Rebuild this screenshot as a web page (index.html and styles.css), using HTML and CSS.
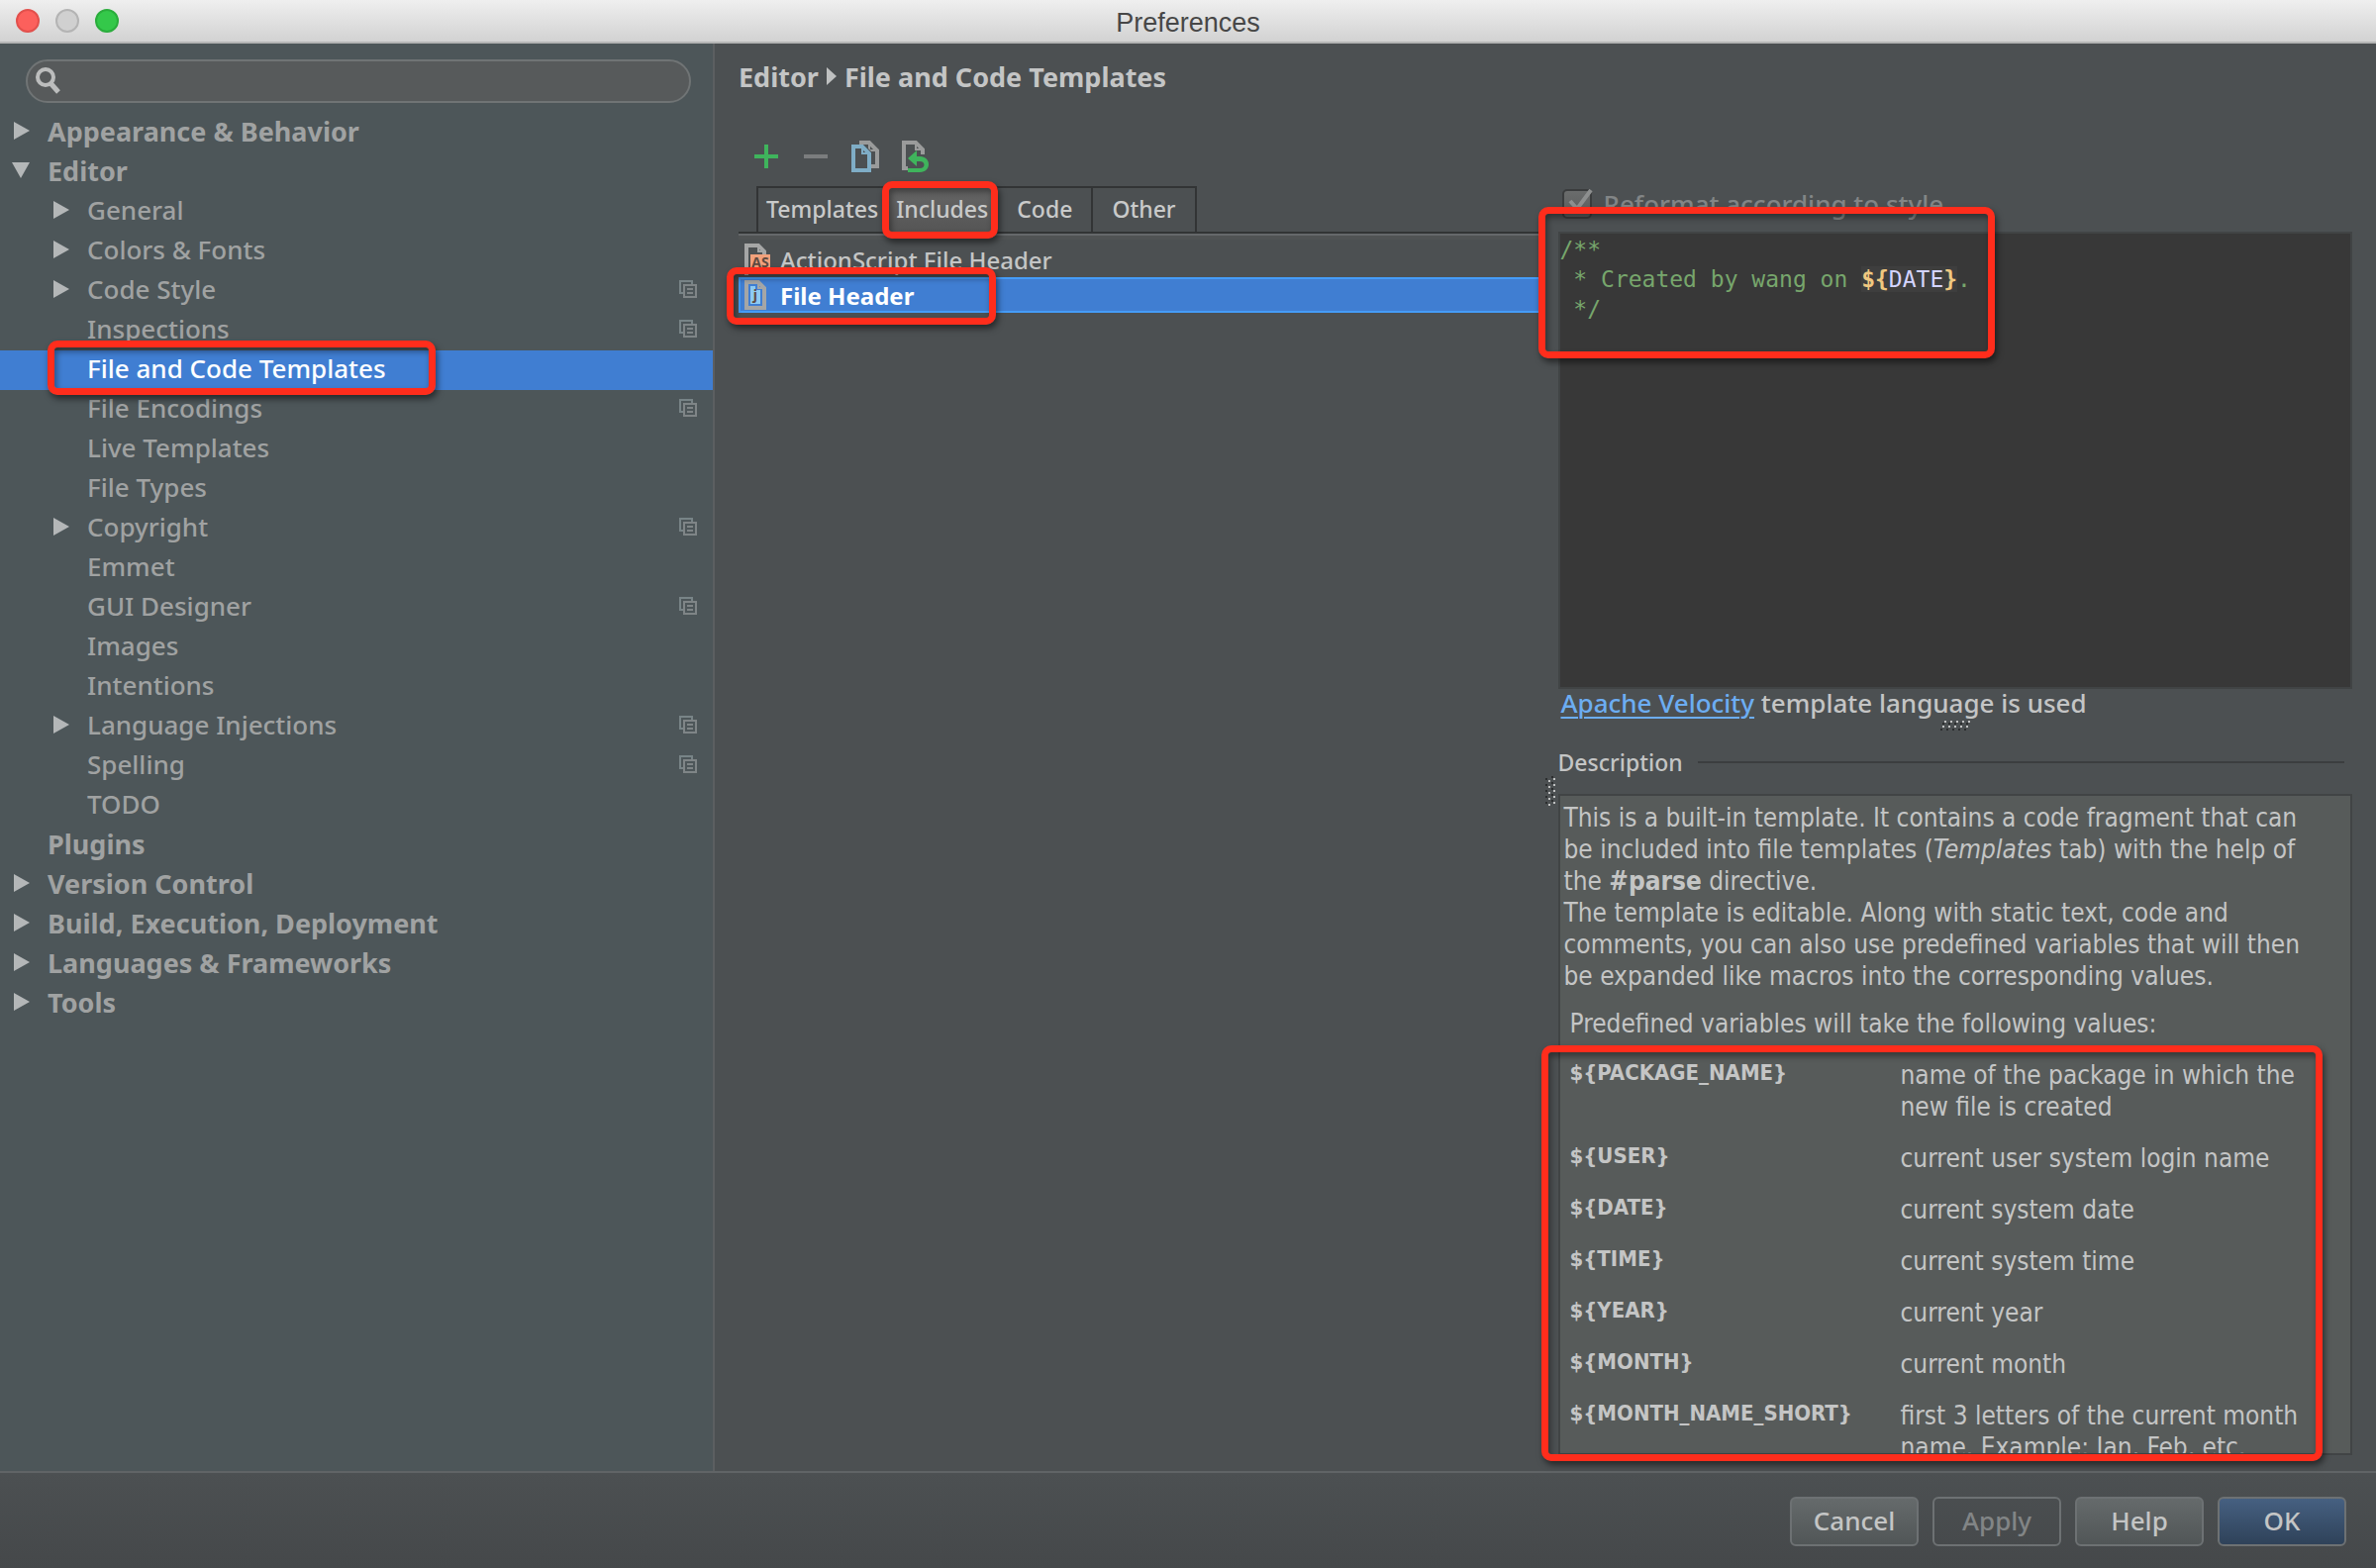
FILE: index.html
```html
<!DOCTYPE html>
<html lang="en">
<head>
    <meta charset="UTF-8">
    <meta name="viewport" content="width=device-width, initial-scale=1.0">
    <title>Preferences</title>
    <link rel="stylesheet" href="styles.css">
</head>
<body>
    <!-- Shared icons -->
    <svg class="sprite" aria-hidden="true">
        <symbol id="icon-project" viewBox="0 0 18 18">
            <path d="M4 13H1V1H13V4" fill="none" stroke="#788487" stroke-width="2"/>
            <path d="M5 5H17V17H5Z M8 9H14 M8 13H14" fill="none" stroke="#7f8587" stroke-width="2"/>
        </symbol>
        <symbol id="icon-right" viewBox="0 0 18 18">
            <path d="M2 0L18 9L2 18Z" fill="#b4b7b8"/>
        </symbol>
        <symbol id="icon-down" viewBox="0 0 18 18">
            <path d="M0 1H18L9 17Z" fill="#b4b7b8"/>
        </symbol>
    </svg>

    <header class="titlebar">
        <div class="lights">
            <button class="light red" aria-label="Close"></button>
            <button class="light gray" aria-label="Minimize"></button>
            <button class="light green" aria-label="Zoom"></button>
        </div>
        <h1>Preferences</h1>
    </header>

    <div class="content">
        <aside class="sidebar">
            <div class="search">
                <svg width="28" height="28" viewBox="0 0 28 28" aria-hidden="true">
                    <circle cx="10" cy="10" r="8" fill="none" stroke="#bcbdbd" stroke-width="4"/>
                    <path d="M15 16L23 25" stroke="#bcbdbd" stroke-width="5"/>
                </svg>
                <input type="text" aria-label="Search settings">
            </div>
            <nav class="tree">
                <a href="#" class="group"><svg class="arrow"><use href="#icon-right"/></svg>Appearance &amp; Behavior</a>
                <a href="#" class="group"><svg class="arrow"><use href="#icon-down"/></svg>Editor</a>
                <a href="#" class="item"><svg class="arrow"><use href="#icon-right"/></svg>General</a>
                <a href="#" class="item"><svg class="arrow"><use href="#icon-right"/></svg>Colors &amp; Fonts</a>
                <a href="#" class="item"><svg class="arrow"><use href="#icon-right"/></svg>Code Style<svg class="project"><use href="#icon-project"/></svg></a>
                <a href="#" class="item"><span class="arrow"></span>Inspections<svg class="project"><use href="#icon-project"/></svg></a>
                <a href="#" class="item selected"><span class="arrow"></span>File and Code Templates<span class="mark mark-tree"></span></a>
                <a href="#" class="item"><span class="arrow"></span>File Encodings<svg class="project"><use href="#icon-project"/></svg></a>
                <a href="#" class="item"><span class="arrow"></span>Live Templates</a>
                <a href="#" class="item"><span class="arrow"></span>File Types</a>
                <a href="#" class="item"><svg class="arrow"><use href="#icon-right"/></svg>Copyright<svg class="project"><use href="#icon-project"/></svg></a>
                <a href="#" class="item"><span class="arrow"></span>Emmet</a>
                <a href="#" class="item"><span class="arrow"></span>GUI Designer<svg class="project"><use href="#icon-project"/></svg></a>
                <a href="#" class="item"><span class="arrow"></span>Images</a>
                <a href="#" class="item"><span class="arrow"></span>Intentions</a>
                <a href="#" class="item"><svg class="arrow"><use href="#icon-right"/></svg>Language Injections<svg class="project"><use href="#icon-project"/></svg></a>
                <a href="#" class="item"><span class="arrow"></span>Spelling<svg class="project"><use href="#icon-project"/></svg></a>
                <a href="#" class="item"><span class="arrow"></span>TODO</a>
                <a href="#" class="group"><span class="arrow"></span>Plugins</a>
                <a href="#" class="group"><svg class="arrow"><use href="#icon-right"/></svg>Version Control</a>
                <a href="#" class="group"><svg class="arrow"><use href="#icon-right"/></svg>Build, Execution, Deployment</a>
                <a href="#" class="group"><svg class="arrow"><use href="#icon-right"/></svg>Languages &amp; Frameworks</a>
                <a href="#" class="group"><svg class="arrow"><use href="#icon-right"/></svg>Tools</a>
            </nav>
        </aside>

        <main class="panel">
            <h2 class="breadcrumb">
                Editor
                <svg width="10" height="18" viewBox="0 0 10 18" aria-hidden="true"><path d="M0 0L10 9L0 18Z" fill="#bfc1c1"/></svg>
                File and Code Templates
            </h2>
            <div class="split">
                <section class="templates">
                    <div class="toolbar">
                        <button aria-label="Add">
                            <svg width="32" height="32" viewBox="0 0 32 32"><path d="M16 4V28M4 16H28" stroke="#3fb45c" stroke-width="4"/></svg>
                        </button>
                        <button aria-label="Remove" disabled>
                            <svg width="32" height="32" viewBox="0 0 32 32"><path d="M4 16H28" stroke="#7b7d7e" stroke-width="4"/></svg>
                        </button>
                        <button aria-label="Copy template">
                            <svg width="32" height="32" viewBox="0 0 32 32">
                                <path d="M10 2H20L28 10V26H22" fill="none" stroke="#9a9b9b" stroke-width="4"/>
                                <path d="M20 1V10H28" fill="none" stroke="#9a9b9b" stroke-width="2"/>
                                <path d="M2 4H15L22 11V32H2Z" fill="#4c5052"/>
                                <path d="M4 6H13L20 13V30H4Z" fill="none" stroke="#7fadc6" stroke-width="4"/>
                                <path d="M13 5V13H21" fill="none" stroke="#7fadc6" stroke-width="2"/>
                            </svg>
                        </button>
                        <button aria-label="Reset to default">
                            <svg width="32" height="32" viewBox="0 0 32 32">
                                <path d="M9 28H5V2H17L24 9V14" fill="none" stroke="#9a9b9b" stroke-width="4"/>
                                <path d="M17 1V9H25" fill="none" stroke="#9a9b9b" stroke-width="2"/>
                                <path d="M9 18L18 10V16H21C33 16 33 32 21 32H9V28H21C27 28 27 21 21 21H18V26Z" fill="#3fb45c"/>
                            </svg>
                        </button>
                    </div>
                    <div class="tabs">
                        <button>Templates</button>
                        <button class="active">Includes<span class="mark mark-tab"></span></button>
                        <button>Code</button>
                        <button>Other</button>
                    </div>
                    <ul class="list">
                        <li><button>
                            <svg width="26" height="32" viewBox="0 0 26 32" aria-hidden="true">
                                <path d="M2 32V2H14L20 8V14" fill="none" stroke="#a5a6a6" stroke-width="4"/>
                                <path d="M14 1V8H21" fill="none" stroke="#a5a6a6" stroke-width="2"/>
                                <rect x="6" y="11" width="20" height="16" fill="#f2a17c"/>
                                <text x="16" y="24" class="icon-text">AS</text>
                            </svg>
                            ActionScript File Header
                        </button></li>
                        <li><button class="selected">
                            <svg width="26" height="30" viewBox="0 0 26 30" aria-hidden="true">
                                <path d="M2 2H14L20 8V28H2Z" fill="none" stroke="#a5a6a6" stroke-width="4"/>
                                <path d="M14 1V8H21" fill="none" stroke="#a5a6a6" stroke-width="2"/>
                                <path d="M6 6H11V10H16V24H6Z" fill="#8ecbf2"/>
                                <text x="11" y="20" class="icon-text">j</text>
                            </svg>
                            File Header
                            <span class="mark mark-list"></span>
                        </button></li>
                    </ul>
                </section>

                <div class="splitter">
                    <svg width="10" height="32" viewBox="0 0 10 32" aria-hidden="true">
                        <path d="M1 2V32M7 0V30" stroke="#2c2e2f" stroke-width="2" stroke-dasharray="2 4"/>
                        <path d="M4 4V32M9 2V30" stroke="#c0c1c1" stroke-width="2" stroke-dasharray="2 4"/>
                    </svg>
                </div>

                <section class="details">
                    <div class="reformat">
                        <span class="checkbox">
                            <input type="checkbox" id="reformat" checked disabled>
                            <svg width="32" height="30" viewBox="0 0 32 30" aria-hidden="true"><path d="M8 12L15 20L29 1" fill="none" stroke="#8d8f8f" stroke-width="4"/></svg>
                        </span>
                        <label for="reformat">Reformat according to style</label>
                    </div>
                    <div class="editor">
                        <pre contenteditable="true" spellcheck="false" role="textbox" aria-label="Template text">/**
 * Created by wang on <span class="macro"><b>${</b>DATE<b>}</b></span>.
 */</pre>
                        <span class="mark mark-code"></span>
                    </div>
                    <p class="velocity"><a href="#">Apache Velocity</a> template language is used</p>
                    <div class="grip">
                        <svg width="30" height="10" viewBox="0 0 30 10" aria-hidden="true">
                            <path d="M2 3H30M0 9H28" stroke="#2c2e2f" stroke-width="2" stroke-dasharray="2 4"/>
                            <path d="M4 1H30M2 6H30" stroke="#c0c1c1" stroke-width="2" stroke-dasharray="2 4"/>
                        </svg>
                    </div>
                    <h3 class="legend">Description</h3>
                    <div class="description">
                        <div class="scroll">
                            <p>This is a built-in template. It contains a code fragment that can be included into file templates (<i>Templates</i> tab) with the help of the <b>#parse</b> directive.<br>
                            The template is editable. Along with static text, code and comments, you can also use predefined variables that will then be expanded like macros into the corresponding values.</p>
                            <table>
                                <caption>Predefined variables will take the following values:</caption>
                                <tbody>
                                    <tr><th scope="row">${PACKAGE_NAME}</th><td>name of the package in which the new file is created</td></tr>
                                    <tr><th scope="row">${USER}</th><td>current user system login name</td></tr>
                                    <tr><th scope="row">${DATE}</th><td>current system date</td></tr>
                                    <tr><th scope="row">${TIME}</th><td>current system time</td></tr>
                                    <tr><th scope="row">${YEAR}</th><td>current year</td></tr>
                                    <tr><th scope="row">${MONTH}</th><td>current month</td></tr>
                                    <tr><th scope="row">${MONTH_NAME_SHORT}</th><td>first 3 letters of the current month name. Example: Jan, Feb, etc.</td></tr>
                                </tbody>
                            </table>
                        </div>
                        <span class="mark mark-vars"></span>
                    </div>
                </section>
            </div>
        </main>
    </div>

    <footer class="footer">
        <button>Cancel</button>
        <button disabled>Apply</button>
        <button>Help</button>
        <button class="primary">OK</button>
    </footer>
</body>
</html>
```
FILE: styles.css
```css
* {
    box-sizing: border-box;
}
body {
    margin: 0;
    height: 100vh;
    display: flex;
    flex-direction: column;
    overflow: hidden;
    background-color: #4c5052;
    color: #c4c5c5;
    font-family: "Noto Sans", "Open Sans", sans-serif;
    font-size: 26px;
    font-weight: 500;
}
h1, h2, h3, p, ul, pre {
    margin: 0;
    padding: 0;
    font-size: inherit;
    font-weight: inherit;
}
button, input {
    font: inherit;
    color: inherit;
    margin: 0;
    padding: 0;
    border: none;
    background: none;
}
svg {
    display: block;
    flex: none;
}
.sprite {
    position: absolute;
    width: 0;
    height: 0;
}

/* Title bar */
.titlebar {
    flex: none;
    height: 44px;
    display: grid;
    grid-template-columns: 1fr auto 1fr;
    align-items: center;
    padding: 0 16px;
    background: linear-gradient(#efefef, #d2d2d2);
    border-bottom: 2px solid #b4b5b5;
    color: #474747;
}
.titlebar h1 {
    padding-top: 3px;
    font-family: "Liberation Sans", Arial, sans-serif;
    font-size: 27px;
    font-weight: normal;
    line-height: 30px;
}
.lights {
    display: flex;
    gap: 16px;
}
.light {
    width: 24px;
    height: 24px;
    border-radius: 50%;
}
.red {
    background-color: #fc605c;
    border: 2px solid #e2504c;
}
.gray {
    background-color: #d0d0d0;
    border: 2px solid #b4b4b4;
}
.green {
    background-color: #34c84a;
    border: 2px solid #2aad3c;
}

/* Sidebar */
.content {
    flex: 1;
    min-height: 0;
    display: flex;
}
.sidebar {
    width: 30%;
    flex: none;
    background-color: #4d5659;
}
.search {
    display: flex;
    align-items: center;
    height: 44px;
    margin: 16px 22px 10px 26px;
    padding: 0 8px;
    border: 2px solid #707475;
    border-radius: 22px;
    background-color: #575a5b;
}
.search input {
    flex: 1;
    outline: none;
}
.tree {
    display: flex;
    flex-direction: column;
}
.tree a {
    position: relative;
    display: flex;
    align-items: center;
    height: 40px;
    padding: 0 16px 4px 12px;
    color: #a0a2a2;
    text-decoration: none;
    white-space: nowrap;
}
.tree .group {
    font-size: 27px;
    font-weight: bold;
}
.tree .item {
    padding-left: 52px;
}
.tree .selected {
    background-color: #407ed2;
    color: #fff;
}
.arrow {
    width: 18px;
    height: 18px;
    margin-right: 18px;
}
.project {
    width: 18px;
    height: 18px;
    margin-left: auto;
}

/* Red frames around the places to look at */
.mark {
    position: absolute;
    z-index: 2;
    border: 7px solid #ff2d1c;
    border-radius: 10px;
    box-shadow: 2px 4px 6px rgba(0, 0, 0, 0.5), inset 2px 4px 6px rgba(0, 0, 0, 0.4);
    pointer-events: none;
}
.mark-tree {
    left: 48px;
    top: -10px;
    width: 392px;
    height: 55px;
}
.mark-tab {
    inset: -7px -2px -7px -6px;
}
.mark-list {
    left: -14px;
    top: -12px;
    width: 272px;
    height: 58px;
}
.mark-code {
    left: -22px;
    top: -27px;
    width: 461px;
    height: 153px;
}
.mark-vars {
    left: -17px;
    right: 30px;
    bottom: -6px;
    height: 420px;
}

/* Main panel */
.panel {
    flex: 1;
    min-width: 0;
    display: flex;
    flex-direction: column;
    padding: 16px 24px 16px;
    border-left: 2px solid #5c5f61;
}
.breadcrumb {
    display: flex;
    align-items: center;
    gap: 8px;
    height: 34px;
    margin-bottom: 2px;
    font-size: 27px;
    font-weight: bold;
}
.split {
    flex: 1;
    min-height: 0;
    display: grid;
    grid-template-columns: 812fr 15px 802fr;
    grid-template-rows: minmax(0, 1fr);
}
.templates {
    padding-top: 46px;
}
.toolbar {
    display: flex;
    gap: 18px;
    height: 46px;
    padding-left: 12px;
}
.toolbar button {
    height: 32px;
}
.tabs {
    display: flex;
    height: 48px;
    padding-left: 18px;
    border-bottom: 2px solid #323435;
    font-size: 23px;
}
.tabs button {
    position: relative;
    padding: 0 19px 3px;
    border: 2px solid #323435;
    border-width: 2px 0 0 2px;
    color: #c9caca;
}
.tabs button:nth-child(-n+2) {
    padding: 0 8px 3px;
}
.tabs button:last-child {
    border-right-width: 2px;
}
.tabs .active {
    background: linear-gradient(#666666, #555555);
}
.list {
    list-style: none;
    padding-top: 6px;
    border-top: 2px solid #65686a;
    box-shadow: inset 0 4px #505354;
    font-size: 24px;
}
.list button {
    position: relative;
    display: flex;
    align-items: center;
    gap: 10px;
    width: 100%;
    height: 36px;
    padding: 0 4px;
    border: 2px solid transparent;
}
.list .selected {
    background-color: #407ed2;
    border-color: #459cf7;
    color: #fff;
    font-weight: bold;
}
.icon-text {
    font: bold 14px "Open Sans", sans-serif;
    fill: #5e4a40;
    text-anchor: middle;
}
.splitter {
    display: flex;
    align-items: center;
    justify-content: center;
    padding-top: 34px;
}

/* Template details */
.details {
    min-width: 0;
    display: flex;
    flex-direction: column;
    padding-top: 92px;
}
.reformat {
    flex: none;
    display: flex;
    align-items: center;
    gap: 12px;
    height: 46px;
    padding: 0 0 10px 4px;
    color: #828586;
}
.checkbox {
    position: relative;
}
.checkbox input {
    display: block;
    appearance: none;
    width: 30px;
    height: 30px;
    border: 2px solid #3a3c3d;
    border-radius: 5px;
    background: linear-gradient(#6a6c6c, #5b5d5d);
}
.checkbox svg {
    position: absolute;
    left: 0;
    top: 0;
}
.editor {
    position: relative;
    flex: none;
    height: 462px;
    border: 2px solid #414445;
    background-color: #383838;
}
.editor pre {
    padding-top: 1px;
    font-family: "DejaVu Sans Mono", monospace;
    font-size: 23px;
    font-weight: normal;
    line-height: 30px;
    color: #77a66c;
    outline: none;
}
.macro {
    background-color: #3e3e3e;
    color: #d3d4ff;
}
.macro b {
    color: #f0c880;
}
.velocity {
    padding-left: 3px;
    line-height: 28px;
}
.velocity a {
    color: #6cadf2;
    text-decoration-thickness: 2px;
    text-underline-offset: 4px;
}
.grip {
    display: flex;
    justify-content: center;
    height: 27px;
    padding-top: 4px;
}
.legend {
    display: flex;
    align-items: center;
    gap: 15px;
    height: 38px;
    margin: 0 8px 13px 0;
    font-size: 23px;
}
.legend::after {
    content: "";
    flex: 1;
    height: 2px;
    background-color: #3b3e3f;
}
.description {
    position: relative;
    flex: 1;
    min-height: 0;
}
.scroll {
    height: 100%;
    overflow: hidden;
    padding: 6px 32px 0 4px;
    border: 2px solid #414445;
    background-color: #575b5a;
    font-family: "DejaVu Sans Condensed", "DejaVu Sans", sans-serif;
    font-size: 26px;
    font-weight: normal;
    line-height: 32px;
}
.scroll table {
    width: 100%;
    margin-top: 16px;
    border-collapse: collapse;
}
.scroll caption {
    padding: 0 0 10px 6px;
    text-align: left;
}
.scroll th {
    width: 340px;
    padding: 10px 0 10px 6px;
    text-align: left;
    vertical-align: top;
    font-size: 22px;
    line-height: 28px;
}
.scroll td {
    padding: 10px 0;
    vertical-align: top;
}

/* Bottom buttons */
.footer {
    flex: none;
    display: flex;
    justify-content: flex-end;
    gap: 14px;
    height: 98px;
    padding: 24px 30px 0;
    border-top: 2px solid #606466;
    background: linear-gradient(#4c5052, #45484a);
}
.footer button {
    width: 130px;
    height: 50px;
    padding-bottom: 3px;
    border: 2px solid #6d7173;
    border-radius: 6px;
    background: linear-gradient(#656a6b, #515657);
}
.footer button:disabled {
    background: none;
    color: #828586;
}
.footer .primary {
    background: linear-gradient(#466081, #2f4259);
}
```
